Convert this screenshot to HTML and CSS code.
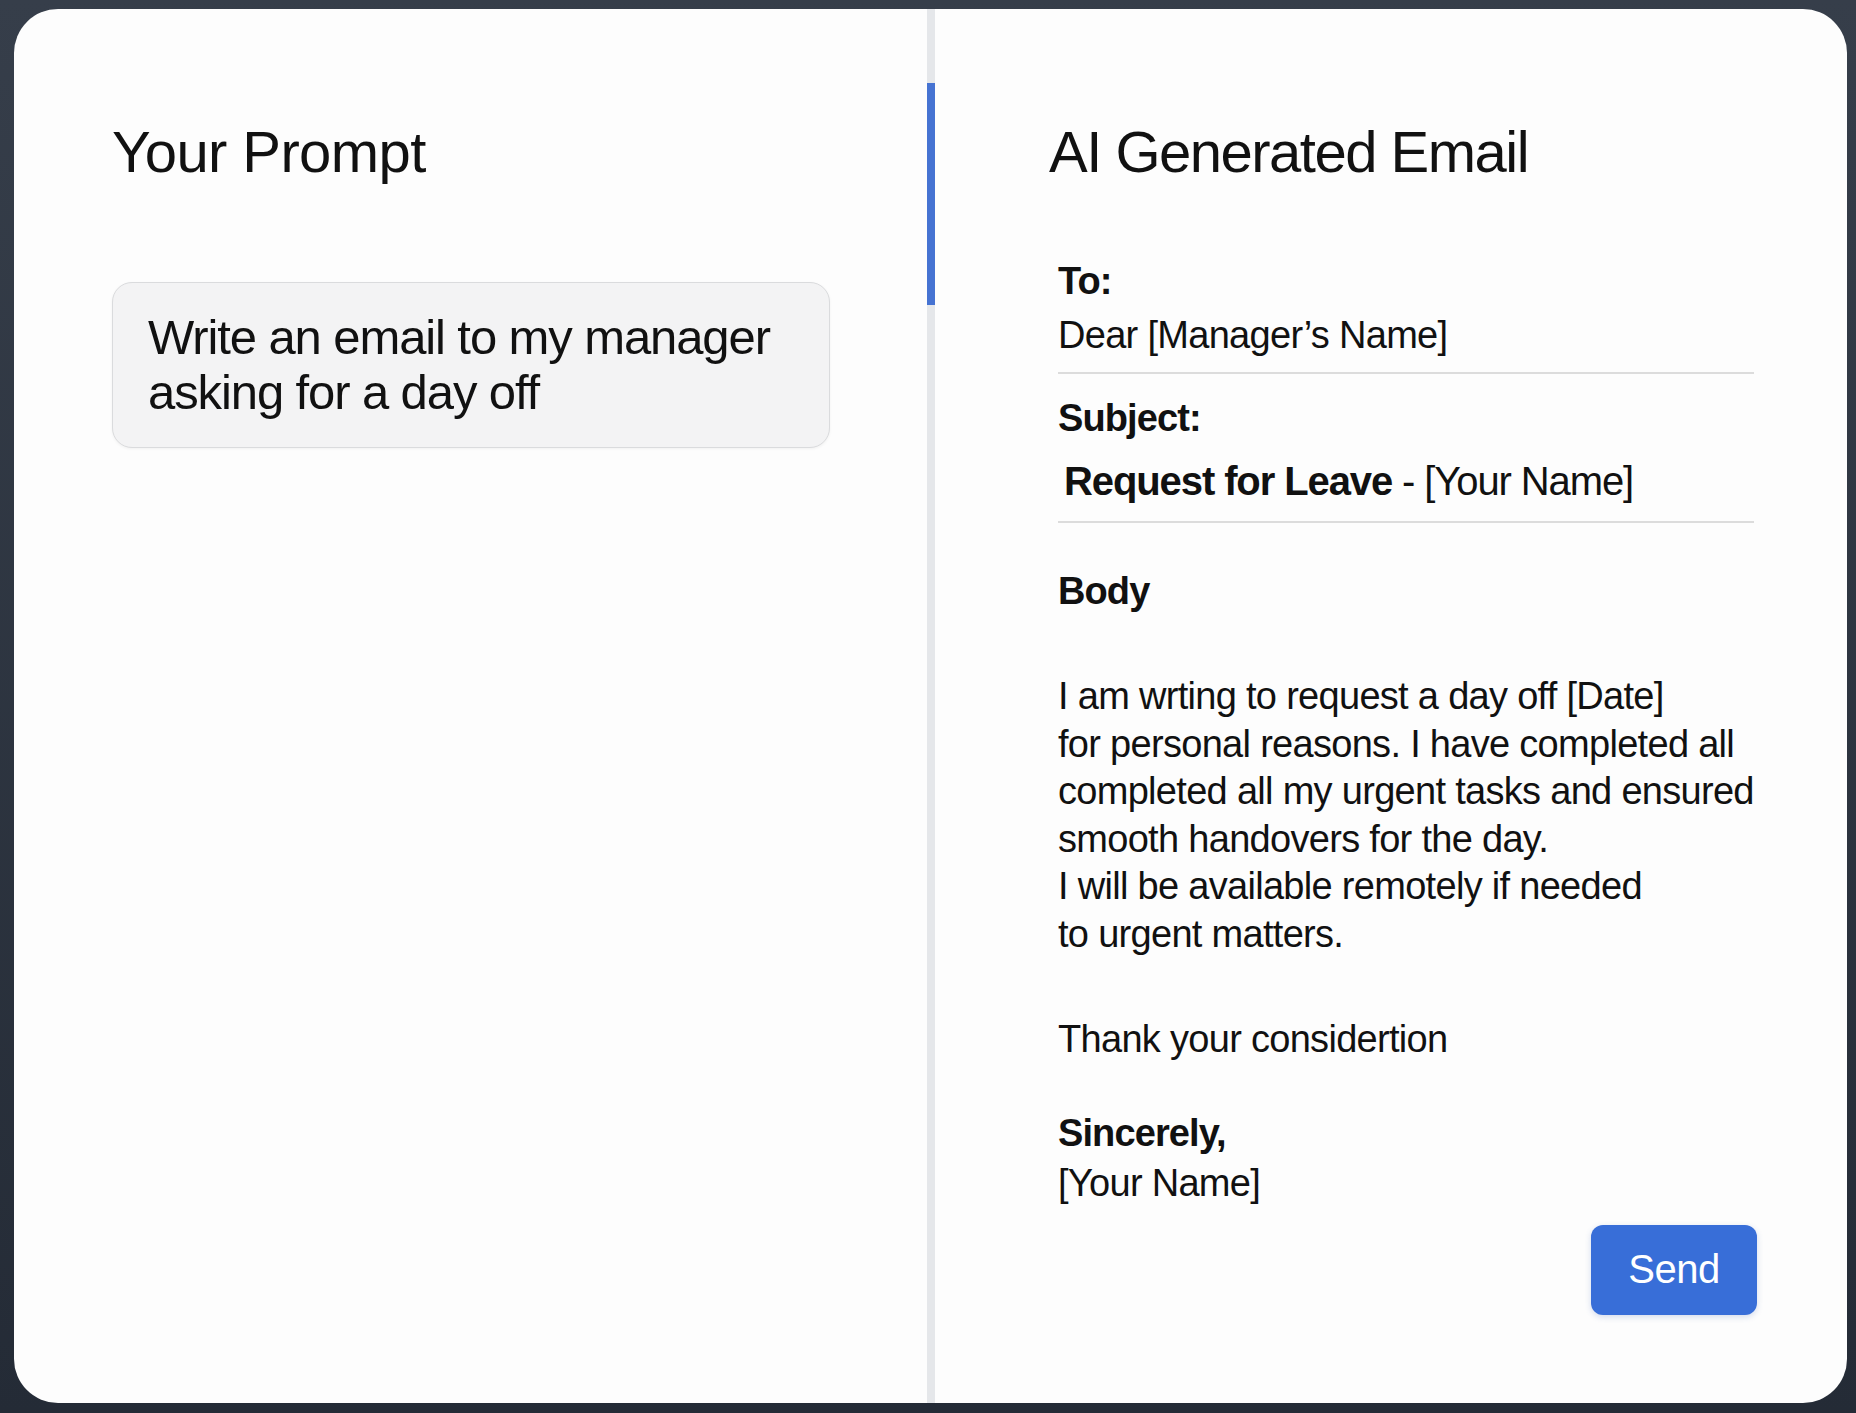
FILE: index.html
```html
<!DOCTYPE html>
<html lang="en">
<head>
    <meta charset="UTF-8">
    <title>AI Email Writer</title>
    <link rel="stylesheet" href="styles.css">
</head>
<body>
<div class="card">
    <section class="pane pane-prompt">
        <h1 class="pane-title">Your Prompt</h1>
        <div class="prompt-box">Write an email to my manager asking for a day off</div>
    </section>

    <div class="divider"><span class="divider-thumb"></span></div>

    <section class="pane pane-email">
        <h1 class="pane-title title-email">AI Generated Email</h1>
        <div class="email">
            <div class="label">To:</div>
            <div class="value">Dear [Manager’s Name]</div>

            <div class="label label-subject">Subject:</div>
            <div class="value value-subject"><b>Request for Leave</b> - [Your Name]</div>

            <div class="label label-body">Body</div>
            <p class="body-text">
                I am wrting to request a day off [Date]<br>
                for personal reasons. I have completed all<br>
                completed all my urgent tasks and ensured<br>
                smooth handovers for the day.<br>
                I will be available remotely if needed<br>
                to urgent matters.
            </p>
            <p class="thanks">Thank your considertion</p>

            <div class="sign">
                <div class="label">Sincerely,</div>
                <div class="sign-name">[Your Name]</div>
            </div>

            <div class="actions">
                <button class="btn-send">Send</button>
            </div>
        </div>
    </section>
</div>
</body>
</html>
```

FILE: styles.css
```css
*{
    margin: 0;
    padding: 0;
    box-sizing: border-box;
}
html, body{
    height: 100%;
}
body{
    padding: 9px 9px 10px 14px;
    background: linear-gradient(#363e4a, #242b36);
    font-family: "Liberation Sans", Arial, sans-serif;
    color: #111;
}
.card{
    display: flex;
    height: 100%;
    background: #fdfdfd;
    border-radius: 44px;
    overflow: hidden;
}
.pane{
    padding-top: 108px;
}
.pane-prompt{
    width: 913px;
    flex-shrink: 0;
    padding-left: 98px;
}
.pane-email{
    flex: 1;
    padding-left: 114px;
    padding-right: 93px;
}
.pane-title{
    font-size: 58px;
    font-weight: 400;
    line-height: 70px;
    letter-spacing: -0.6px;
}
.title-email{
    letter-spacing: -1.5px;
}

/* prompt */
.prompt-box{
    width: 718px;
    margin-top: 95px;
    padding: 27px 30px 27px 35px;
    border: 1px solid #dadbdd;
    border-radius: 20px;
    background: #f3f3f4;
    box-shadow: 0 1px 3px rgba(0,0,0,0.05);
    font-size: 49px;
    line-height: 55px;
    letter-spacing: -1.1px;
}

/* divider */
.divider{
    width: 8px;
    flex-shrink: 0;
    background: #e5e7ea;
}
.divider-thumb{
    display: block;
    margin-top: 74px;
    height: 222px;
    background: #4673d2;
}

/* email */
.email{
    margin: 71px 0 0 9px;
    font-size: 38px;
    letter-spacing: -0.7px;
}
.label{
    font-weight: 700;
    line-height: 46px;
    letter-spacing: -0.9px;
}
.value{
    margin-top: 8px;
    padding-bottom: 14px;
    line-height: 46px;
    border-bottom: 2px solid #dcdcdc;
}
.label-subject{
    margin-top: 21px;
}
.value-subject{
    margin-top: 16px;
    padding: 0 0 16px 6px;
    font-size: 40px;
    line-height: 48px;
    letter-spacing: -1.1px;
}
.label-body{
    margin-top: 45px;
}
.body-text{
    margin-top: 59px;
    line-height: 47.5px;
}
.thanks{
    margin-top: 58px;
    line-height: 47.5px;
}
.sign{
    margin-top: 46px;
}
.sign-name{
    margin-top: 4px;
    line-height: 46px;
}
.actions{
    display: flex;
    justify-content: flex-end;
    margin-top: 19px;
}
.btn-send{
    width: 166px;
    height: 90px;
    margin-right: -3px;
    border: 0;
    border-radius: 12px;
    background: #386ed8;
    box-shadow: 0 2px 6px rgba(40,80,170,0.2);
    color: #fff;
    font-family: inherit;
    font-size: 40px;
    letter-spacing: -0.5px;
    cursor: pointer;
}
```
